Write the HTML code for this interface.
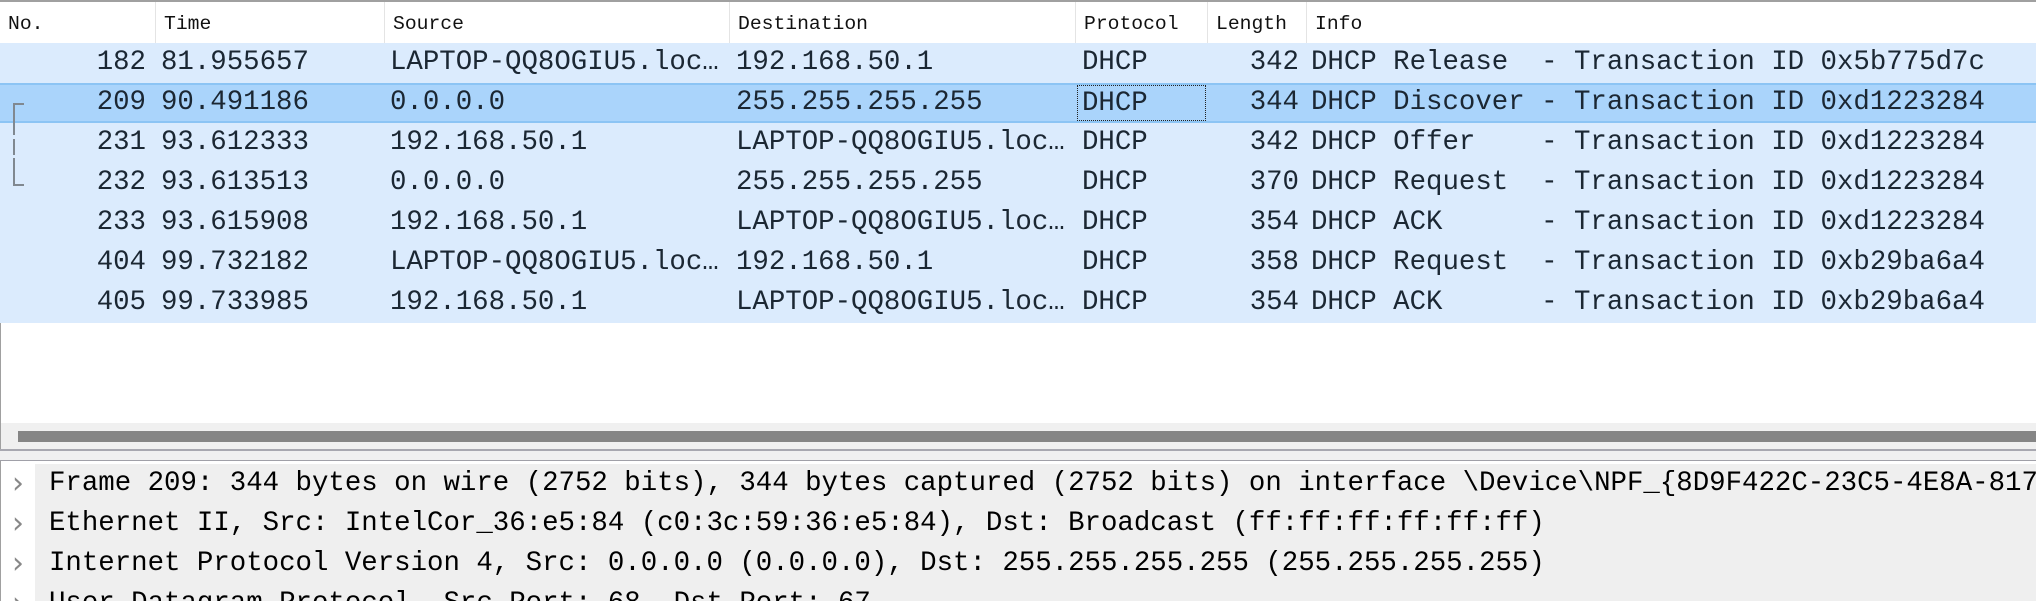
<!DOCTYPE html>
<html><head><meta charset="utf-8"><style>
*{margin:0;padding:0;box-sizing:border-box}
html,body{width:2036px;height:601px;overflow:hidden}
body{background:#fff;position:relative;font-family:"Liberation Mono",monospace;color:#1b2733}
.hdr{position:absolute;top:0;left:0;width:2036px;height:43px;border-top:2px solid #a0a0a0;background:#fff}
.h{position:absolute;top:0;height:41px;line-height:44px;font-size:19.7px;color:#111;padding-left:8px;border-left:1px solid #e4e4e4}
.row{position:absolute;left:0;width:2036px;height:40px;background:#dbebfd;font-size:27.4px;line-height:40px;white-space:pre}
.sel{background:#aad4fb;border-top:2px solid #8cc4f4;border-bottom:2px solid #8cc4f4;line-height:36px}
.c{position:absolute;top:0}
.r{text-align:right}
.det{position:absolute;left:35px;width:2001px;height:40px;background:#efefef;font-size:27.4px;line-height:40px;white-space:pre;padding-left:14px;color:#000}
.ar{position:absolute;left:12px;font-size:30px;line-height:40px;color:#888;font-family:"DejaVu Sans",sans-serif}
</style></head><body>
<div class="hdr">
<div class="h" style="left:0;border-left:none">No.</div>
<div class="h" style="left:155px">Time</div>
<div class="h" style="left:384px">Source</div>
<div class="h" style="left:729px">Destination</div>
<div class="h" style="left:1075px">Protocol</div>
<div class="h" style="left:1207px">Length</div>
<div class="h" style="left:1306px">Info</div>
</div>
<div style="position:absolute;left:0;top:43px;width:1px;height:406px;background:#a0a0a0"></div>

<div class="row" style="top:43px"><span class="c r" style="left:0;width:146px">182</span><span class="c" style="left:161px">81.955657</span><span class="c" style="left:390px">LAPTOP-QQ8OGIU5.loc…</span><span class="c" style="left:736px">192.168.50.1</span><span class="c" style="left:1082px">DHCP</span><span class="c r" style="left:1200px;width:99px">342</span><span class="c" style="left:1311px">DHCP Release  - Transaction ID 0x5b775d7c</span></div>
<div class="row sel" style="top:83px"><span class="c r" style="left:0;width:146px">209</span><span class="c" style="left:161px">90.491186</span><span class="c" style="left:390px">0.0.0.0</span><span class="c" style="left:736px">255.255.255.255</span><span class="c" style="left:1077px;width:129px;height:36px;border:1.5px dotted #222;padding-left:4px">DHCP</span><span class="c r" style="left:1200px;width:99px">344</span><span class="c" style="left:1311px">DHCP Discover - Transaction ID 0xd1223284</span></div>
<div class="row" style="top:123px"><span class="c r" style="left:0;width:146px">231</span><span class="c" style="left:161px">93.612333</span><span class="c" style="left:390px">192.168.50.1</span><span class="c" style="left:736px">LAPTOP-QQ8OGIU5.loc…</span><span class="c" style="left:1082px">DHCP</span><span class="c r" style="left:1200px;width:99px">342</span><span class="c" style="left:1311px">DHCP Offer    - Transaction ID 0xd1223284</span></div>
<div class="row" style="top:163px"><span class="c r" style="left:0;width:146px">232</span><span class="c" style="left:161px">93.613513</span><span class="c" style="left:390px">0.0.0.0</span><span class="c" style="left:736px">255.255.255.255</span><span class="c" style="left:1082px">DHCP</span><span class="c r" style="left:1200px;width:99px">370</span><span class="c" style="left:1311px">DHCP Request  - Transaction ID 0xd1223284</span></div>
<div class="row" style="top:203px"><span class="c r" style="left:0;width:146px">233</span><span class="c" style="left:161px">93.615908</span><span class="c" style="left:390px">192.168.50.1</span><span class="c" style="left:736px">LAPTOP-QQ8OGIU5.loc…</span><span class="c" style="left:1082px">DHCP</span><span class="c r" style="left:1200px;width:99px">354</span><span class="c" style="left:1311px">DHCP ACK      - Transaction ID 0xd1223284</span></div>
<div class="row" style="top:243px"><span class="c r" style="left:0;width:146px">404</span><span class="c" style="left:161px">99.732182</span><span class="c" style="left:390px">LAPTOP-QQ8OGIU5.loc…</span><span class="c" style="left:736px">192.168.50.1</span><span class="c" style="left:1082px">DHCP</span><span class="c r" style="left:1200px;width:99px">358</span><span class="c" style="left:1311px">DHCP Request  - Transaction ID 0xb29ba6a4</span></div>
<div class="row" style="top:283px"><span class="c r" style="left:0;width:146px">405</span><span class="c" style="left:161px">99.733985</span><span class="c" style="left:390px">192.168.50.1</span><span class="c" style="left:736px">LAPTOP-QQ8OGIU5.loc…</span><span class="c" style="left:1082px">DHCP</span><span class="c r" style="left:1200px;width:99px">354</span><span class="c" style="left:1311px">DHCP ACK      - Transaction ID 0xb29ba6a4</span></div>

<svg style="position:absolute;left:0;top:83px" width="40" height="110"><path d="M24 21H14V102H24" fill="none" stroke="#808890" stroke-width="2"/><path d="M14 52V56M14 72V75" stroke="#dbebfd" stroke-width="3"/></svg>

<div style="position:absolute;left:1px;top:423px;width:2035px;height:26px;background:#f0f0f0"></div>
<div style="position:absolute;left:18px;top:431px;width:2018px;height:11px;background:#858585"></div>
<div style="position:absolute;left:0;top:449px;width:2036px;height:2px;background:#a8a8b0"></div>
<div style="position:absolute;left:0;top:451px;width:2036px;height:9px;background:#f0f0f0"></div>
<div style="position:absolute;left:0;top:460px;width:2036px;height:1px;background:#a0a0a8"></div>
<div style="position:absolute;left:0;top:461px;width:1px;height:140px;background:#a0a0a0"></div>

<div class="ar" style="top:464px">›</div><div class="det" style="top:464px">Frame 209: 344 bytes on wire (2752 bits), 344 bytes captured (2752 bits) on interface \Device\NPF_{8D9F422C-23C5-4E8A-817</div>
<div class="ar" style="top:504px">›</div><div class="det" style="top:504px">Ethernet II, Src: IntelCor_36:e5:84 (c0:3c:59:36:e5:84), Dst: Broadcast (ff:ff:ff:ff:ff:ff)</div>
<div class="ar" style="top:544px">›</div><div class="det" style="top:544px">Internet Protocol Version 4, Src: 0.0.0.0 (0.0.0.0), Dst: 255.255.255.255 (255.255.255.255)</div>
<div class="ar" style="top:584px">›</div><div class="det" style="top:584px">User Datagram Protocol, Src Port: 68, Dst Port: 67</div>
</body></html>
